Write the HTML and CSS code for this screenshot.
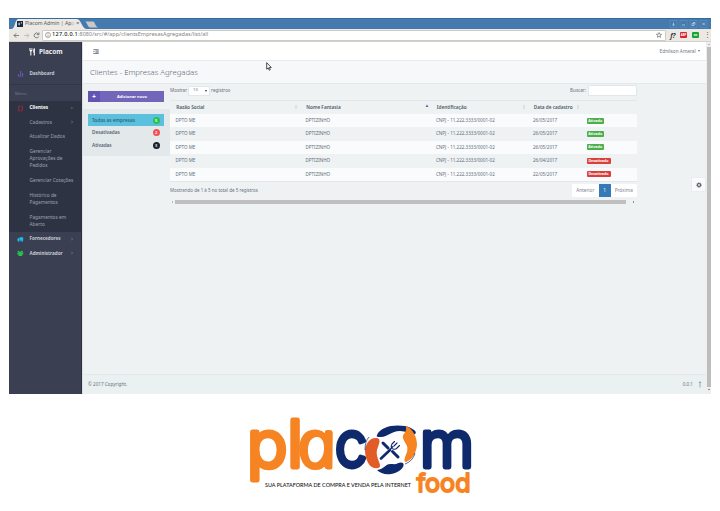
FILE: index.html
```html
<!DOCTYPE html>
<html lang="pt-BR">
<head>
<meta charset="utf-8">
<title>Placom Admin</title>
<link rel="stylesheet" href="styles.css">
</head>
<body>
<div class="window">
  <div class="titlebar">
    <div class="tab">
      <svg class="tab-shape" viewBox="0 0 92 10"><path d="M3 10C6 9 6 1 9 0H68C72 0 73 9 77 10Z" fill="#ece8e4"/><path d="M76 2.500H84C86 2.500 86 7 89 8.500H81C79 8.500 78 3.500 76 2.500Z" fill="#c9c7c7"/></svg>
      <svg class="favicon" viewBox="0 0 7 7"><rect width="7" height="7" fill="#18283e"/><path d="M1.500 2h2v3h-2zM4.500 1.200h1.300v2H4.500z" fill="#9badc0"/></svg>
      <span class="tab-title">Placom Admin | Ap<i>p</i></span><span class="tab-close">×</span>
    </div>
    <div class="controls">
      <svg viewBox="0 0 40 8" fill="none" stroke="#6894bd" stroke-width=".5"><rect x="1" y=".5" width="7" height="7"/><rect x="11" y=".5" width="7" height="7"/><rect x="21" y=".5" width="7" height="7"/><rect x="31" y=".5" width="7" height="7"/><g stroke="#c9dbea" stroke-width=".7"><path d="M4.500 2.500v3M3.300 5h2.400M13 5h3M23 3.500h2V5.500h-2zM24 2.500h2v2M33.400 2.700l2.500 2.500M35.900 2.700l-2.500 2.500"/></g></svg>
    </div>
  </div>
  <div class="toolbar">
    <svg class="nav" viewBox="0 0 32 9" fill="none" stroke="#666" stroke-width=".8"><path d="M9 4.500H4M6.300 2.200L4 4.500L6.300 6.800"/><path d="M14 4.500h5M16.700 2.200L19 4.500L16.700 6.800" stroke="#b7b4b0"/><path d="M28.500 3A2.400 2.400 0 1 0 28.800 5.400M29 1.500V3.600H26.800"/></svg>
    <div class="address">
      <svg viewBox="0 0 6 6" fill="none" stroke="#666" stroke-width=".6"><circle cx="3" cy="3" r="2.500"/><path d="M3 2.600v2M3 1.300v.6"/></svg>
      <span class="url"><b>127.0.0.1</b>:8080/src/#/app/clientsEmpresasAgregadas/list/all</span>
      <svg class="star" viewBox="0 0 6 6" fill="none" stroke="#555" stroke-width=".6"><path d="M3 .5l.7 1.700 1.900.1L4.100 3.500l.5 1.900L3 4.300 1.400 5.400l.5-1.900L.4 2.300l1.900-.1z"/></svg>
    </div>
    <span class="fq">f?</span><span class="ext red">ABP</span><span class="ext green">on</span><span class="dots">⋮</span>
  </div>
  <div class="app">
    <aside class="sidebar">
      <div class="brand"><svg viewBox="0 0 8 9" fill="#fff"><path d="M.5 0h.7v2.300h.6V0h.7v2.300h.6V0h.7v3.200L2.700 4v4.600H1.500V4L.5 3.200zM5 1l1.700-1v8.600H5.400V5H4.700z"/></svg>Placom</div>
      <div class="item dash"><svg class="mi" viewBox="0 0 7 7" fill="#6254b2"><path d="M1 4h1.200v2H1zM3 1h1.200v5H3zM5 3h1.200v3H5zM.5 6.200h6v.5h-6z"/></svg>Dashboard</div>
      <div class="menu-label">Menu</div>
      <div class="submenu">
        <div class="item active"><svg class="mi" viewBox="0 0 7 7" fill="none" stroke="#b52b38" stroke-width=".8"><path d="M3 1.200H1.700v4.600H3M4 1.200h1.300v4.600H4"/></svg>Clientes<svg class="chev" viewBox="0 0 4 4"><path d="M.7 1.300L2 2.600 3.300 1.300"/></svg></div>
        <div class="sub">Cadastros<svg class="chev" viewBox="0 0 4 4"><path d="M1.300.7L2.600 2 1.300 3.300"/></svg></div>
        <div class="sub">Atualizar Dados</div>
        <div class="sub">Gerenciar<br>Aprovações de<br>Pedidos</div>
        <div class="sub">Gerenciar Cotações</div>
        <div class="sub">Histórico de<br>Pagamentos</div>
        <div class="sub">Pagamentos em<br>Aberto</div>
      </div>
      <div class="item"><svg class="mi" viewBox="0 0 7 7" fill="#23b7e5"><path d="M2.500 1.300H6.200v3.500H2.500zM.3 3.200L1.200 2h1v2.800H.3z"/><circle cx="1.600" cy="5.200" r=".7"/><circle cx="5" cy="5.200" r=".7"/></svg>Fornecedores<svg class="chev" viewBox="0 0 4 4"><path d="M1.300.7L2.600 2 1.300 3.300"/></svg></div>
      <div class="item"><svg class="mi" viewBox="0 0 7 7" fill="#27c24c"><circle cx="1.600" cy="1.700" r="1"/><circle cx="5" cy="1.700" r="1"/><circle cx="3.300" cy="2.600" r="1.200"/><path d="M.3 2.700h6v1.500L5.200 4.600V6h-3.700V4.600L.3 4.200z"/></svg>Administrador<svg class="chev" viewBox="0 0 4 4"><path d="M1.300.7L2.600 2 1.300 3.300"/></svg></div>
    </aside>
    <main class="main">
      <header class="topbar">
        <svg class="outdent" viewBox="0 0 6 5" stroke="#596274" stroke-width=".8"><path d="M.3.700h5.400M2.500 2h3.200M2.500 3.200h3.200M.3 4.500h5.400M.3 2.600h1.300"/></svg>
        <span class="user">Ednilson Amaral <i class="caret"></i></span>
      </header>
      <h1>Clientes - Empresas Agregadas</h1>
      <div class="content">
        <section class="filters">
          <div class="add-wrap"><button class="add"><span class="plus">+</span><span class="add-text">Adicionar novo</span></button></div>
          <div class="list">
            <div class="filter on"><span>Todos as empresas</span><em class="badge b-green">5</em></div>
            <div class="filter"><span>Desativadas</span><em class="badge b-red">2</em></div>
            <div class="filter"><span>Ativadas</span><em class="badge b-dark">3</em></div>
          </div>
        </section>
        <section class="data">
          <div class="tools"><span>Mostrar</span><span class="select">10<i class="caret dark"></i></span><span>registros</span><span class="search">Buscar:<input></span></div>
          <div class="row head"><span>Razão Social<svg class="sort" viewBox="0 0 4 6"><path d="M1 2.400L2 .8l1 1.600zM1 3.600l1 1.600 1-1.600z"/></svg></span><span>Nome Fantasia<svg class="sort asc" viewBox="0 0 4 6"><path d="M.5 3L2 .6 3.500 3z"/></svg></span><span>Identificação<svg class="sort" viewBox="0 0 4 6"><path d="M1 2.400L2 .8l1 1.600zM1 3.600l1 1.600 1-1.600z"/></svg></span><span>Data de cadastro<svg class="sort" viewBox="0 0 4 6"><path d="M1 2.400L2 .8l1 1.600zM1 3.600l1 1.600 1-1.600z"/></svg></span><span></span></div>
          <div class="row odd"><span>DPTO ME</span><span>DPTIZINHO</span><span>CNPJ - 11.222.3333/0001-02</span><span>26/05/2017</span><span><em class="tag ok">Ativado</em></span></div>
          <div class="row"><span>DPTO ME</span><span>DPTIZINHO</span><span>CNPJ - 11.222.3333/0001-02</span><span>26/05/2017</span><span><em class="tag ok">Ativado</em></span></div>
          <div class="row odd"><span>DPTO ME</span><span>DPTIZINHO</span><span>CNPJ - 11.222.3333/0001-02</span><span>26/05/2017</span><span><em class="tag ok">Ativado</em></span></div>
          <div class="row"><span>DPTO ME</span><span>DPTIZINHO</span><span>CNPJ - 11.222.3333/0001-02</span><span>26/04/2017</span><span><em class="tag no">Desativado</em></span></div>
          <div class="row odd"><span>DPTO ME</span><span>DPTIZINHO</span><span>CNPJ - 11.222.3333/0001-02</span><span>22/05/2017</span><span><em class="tag no">Desativado</em></span></div>
          <div class="foot"><span class="info">Mostrando de 1 à 5 no total de 5 registros</span><div class="pager"><span>Anterior</span><span class="cur">1</span><span>Próxima</span></div></div>
          <div class="hscroll"><i class="al"></i><i class="bar"></i><i class="ar"></i></div>
        </section>
      </div>
      <footer><span>© 2017 Copyright.</span><span class="ver">0.0.1</span><svg class="up" viewBox="0 0 4 7" fill="none" stroke="#6f7a89" stroke-width=".6"><path d="M2 6.500V.8M.8 2L2 .8 3.200 2"/></svg></footer>
      <div class="settings"><svg viewBox="0 0 6 6" fill="none" stroke="#4f5968"><circle cx="3" cy="3" r="1.500" stroke-width="1.200"/><circle cx="3" cy="3" r="2.300" stroke-width=".9" stroke-dasharray=".9 .9"/></svg></div>
    </main>
    <div class="vscroll"><i class="vu"></i><i class="vbar"></i><i class="vd"></i></div>
  </div>
</div>
<svg class="cursor" viewBox="0 0 6 9"><path d="M.7.7v6.500l1.500-1.300 1 2.300 1.100-.5-1-2.200h2z" fill="#fff" stroke="#222" stroke-width=".8"/></svg>
<svg class="logo" viewBox="240 400 240 105">
  <g class="word orange"><text x="247" y="466.500" textLength="56" lengthAdjust="spacingAndGlyphs">pl</text><text class="round-a" transform="translate(301.500 466.500) skewX(12)" textLength="38" lengthAdjust="spacingAndGlyphs">a</text></g>
  <g class="word navy"><text x="335" y="466.500" textLength="32" lengthAdjust="spacingAndGlyphs">c</text><text x="420" y="466.500" textLength="54" lengthAdjust="spacingAndGlyphs">m</text></g>
  <circle cx="391" cy="450" r="22" fill="#fff"/>
  <path d="M377 435C380 427 393 424 405 426C413 428 418 432 415 434C411 436 407 431 400 431C391 431 388 437 381 437C378 437 376 437 377 435Z" fill="#0e2a6d"/>
  <path d="M376 438C382 438 379 444 377 450C375 458 384 467 378 468C370 470 365 460 365 450C366 444 369 438 376 438Z" fill="#e35b26"/>
  <path d="M406 426C413 429 417 437 417 445C416 455 411 460 406 462C403 462 405 457 407 452C409 445 404 443 403 438C402 433 407 434 406 426Z" fill="#f68423"/>
  <path d="M377 470C385 469 385 463 392 464C398 465 399 461 403 463C406 467 398 473 391 474C385 475 380 473 377 470Z" fill="#0e2a6d"/>
  <path d="M405 464Q413 461 415 453M365 450Q365 441 369 437" fill="none" stroke="#0e2a6d" stroke-width=".7"/>
  <g stroke="#0e2a6d" stroke-linecap="round" fill="none"><path d="M381 458.500L390 450" stroke-width="2.600"/><path d="M389 450.500L393 446.500M392 444Q390 448 393 449Q396 450 398 447M392 444L394.500 441.500M394 446L397 443M397 448L399.500 445.500" stroke-width="1.100"/><path d="M383 443L388 448M392.500 451.500L398 457" stroke-width="3"/></g>
  <text class="slogan" x="265" y="487" textLength="146" lengthAdjust="spacingAndGlyphs">SUA PLATAFORMA DE COMPRA E VENDA PELA INTERNET</text>
  <text class="food" x="416.500" y="492" textLength="54" lengthAdjust="spacingAndGlyphs">food</text>
</svg>
</body>
</html>
```

FILE: styles.css
```css
*{box-sizing:border-box}
body{margin:0;width:720px;height:511px;background:#fff;overflow:hidden;position:relative;font:5px/7.3px "Noto Sans",sans-serif;color:#66707e}
svg{display:block;flex:none;overflow:visible}
i,em{font-style:normal}
.window{margin:18px 0 0 9px;width:702px;height:376px;display:flex;flex-direction:column}
.titlebar{height:11px;background:#447aae;display:flex;justify-content:space-between;border-top:1px solid #366b9f}
.tab{width:92px;height:10px;position:relative;display:flex;align-items:center;padding-left:8px;color:#555;font-size:5.5px;white-space:nowrap}
.tab-shape{position:absolute;left:0;top:0;width:92px;height:10px}
.favicon{position:relative;width:6px;height:6px}
.tab-title{position:relative;margin-left:2px;width:51px;font-size:5.1px}
.tab-title i{opacity:.3}
.tab-close{position:relative;font-size:6px}
.controls{width:42px;padding-top:1px}
.controls svg{width:40px;height:8px}
.toolbar{height:13px;background:#ece8e4;display:flex;align-items:center;border-bottom:1px solid #d5d1cd}
.nav{width:32px;height:9px;margin-left:1px}
.address{width:628px;height:11px;background:#fff;border:1px solid #cfcac5;border-radius:1px;display:flex;align-items:center;padding:0 3px 0 2px}
.address svg{width:6px;height:6px}
.url{margin-left:1px;font-size:5.5px;color:#858585;white-space:nowrap}
.url b{font-weight:500;color:#222;letter-spacing:.3px}
.address .star{margin-left:auto}
.fq{margin-left:4px;width:10px;font:italic bold 6.5px "Noto Sans",sans-serif;color:#333}
.ext{width:7px;height:6px;border-radius:1px;color:#fff;font-size:2.8px;line-height:6px;text-align:center;font-weight:bold}
.red{background:#d8232c}
.green{background:#16a62f;margin-left:5px}
.dots{margin-left:5px;font-size:7px;color:#555}
.app{height:352px;display:flex}
.sidebar{width:73px;background:#3a3f51;color:#b3b7c4;flex:none;border-right:1px solid #2e3344}
.brand{height:19px;display:flex;align-items:center;padding-left:20px;color:#eceef4;font-size:6.5px;font-weight:bold;white-space:nowrap}
.brand svg{width:7px;height:8px;margin-right:3px}
.item,.sub{position:relative;padding:3.65px 0 3.65px 20.500px;white-space:nowrap;line-height:7.300px;font-size:4.800px}
.item{font-weight:bold;font-size:4.6px;color:#c6cad5}
.dash{height:23.500px;padding-top:9px;border-bottom:1px solid #323747}
.mi{position:absolute;left:8px;top:4px;width:7px;height:7px}
.dash .mi{top:9px}
.chev{position:absolute;right:7px;top:5px;width:4px;height:4px;fill:none;stroke:#868d9e;stroke-width:.6}
.menu-label{height:16px;padding:5.500px 0 0 6px;font-size:4.3px;color:#777e91}
.submenu{background:#2e3344;color:#9ba1b0}
.submenu .active{color:#fff}
.main{width:624px;position:relative;background:#eef2f3;display:flex;flex-direction:column;border-left:1px solid #dce0e4}
.topbar{height:19px;background:#fff;border-bottom:1px solid #e8ebed;display:flex;align-items:center;justify-content:space-between;padding:0 6px 0 10px}
.outdent{width:6px;height:5px}
.user{font-size:4.75px;color:#6f7784;padding-top:1px}
.caret{display:inline-block;border:1.300px solid transparent;border-top:2px solid #6f7784;border-bottom:0;vertical-align:1px;margin-left:1px}
h1{margin:0;height:23px;padding-left:7px;background:#f6f8f9;border-bottom:1px solid #e3e8ea;font-weight:300;font-size:7.7px;line-height:23px;color:#5c6673;white-space:nowrap}
.content{height:290px;display:flex}
.filters{width:87px}
.add-wrap{height:25px;padding:6.500px 6px 0 5px}
.add{display:flex;width:76px;height:11px;padding:0;border:0;background:#7266ba;color:#fff;font:bold 4.1px/11px "Noto Sans",sans-serif;align-items:center}
.plus{width:12px;background:#6254b2;font-size:7px;height:11px}
.add-text{flex:1;font-size:4px}
.list{height:47px;background:#e3e8eb;padding:5.300px 6px 0 5px}
.filter{height:12.500px;display:flex;align-items:center;justify-content:space-between;padding:.5px 4px 0;font-size:4.7px;font-weight:600;color:#566170}
.on{background:#5bc0de;height:12px;color:#34667a}
.badge{width:7.500px;height:7px;border-radius:4px;color:#fff;font-size:4px;line-height:7px;text-align:center}
.b-green{background:#27c24c}
.b-red{background:#f05050}
.b-dark{background:#18222d}
.data{width:467px}
.tools{height:16px;display:flex;align-items:center;font-size:4.6px;padding-bottom:3px}
.select{width:22px;height:10px;background:#fff;border:1px solid #e2e7e9;margin:0 1px;padding-left:4px;font-size:4px;line-height:8.500px;display:flex;align-items:center;gap:7px}
.dark{border-top-color:#333;margin:0}
.search{margin-left:auto;display:flex;align-items:center;gap:2px}
.search input{width:49px;height:11px;border:1px solid #e2e7e9;background:#fff;padding:0}
.row{height:13.450px;display:grid;grid-template-columns:130px 130.500px 97px 54px 55.500px;align-items:center;color:#636e7b;font-size:4.55px;white-space:nowrap}
.row>span{padding-left:5.500px;position:relative}
.odd{background:#fafbfc}
.head{border-top:1px solid #e2e7e9;font-weight:600;font-size:4.7px;color:#4e5967;height:13.800px}
.head>span{padding-left:6.300px}
.sort{position:absolute;right:2px;top:.5px;width:4px;height:6px;fill:#c4cbd0}
.asc{fill:#6961b4}
.tag{display:block;width:17.500px;height:6px;margin-left:-.5px;border-radius:1px;color:#fff;font-size:3.6px;line-height:6px;font-weight:bold;text-align:center}
.ok{background:#4cae4c}
.no{background:#d9403d;width:24px}
.foot{display:flex;justify-content:space-between;height:18px;border-top:1px solid #e2e7e9}
.info{margin-top:5px;font-size:4.45px;letter-spacing:.02px}
.pager{display:flex;margin-top:2.500px;height:12.500px;background:#fff;line-height:12px;font-size:4.7px;color:#7a838f}
.pager span{width:26.500px;text-align:center}
.pager .cur{width:12px;background:#337ab7;color:#fff}
.hscroll{height:5px;display:flex;align-items:center;margin-top:1px;padding-left:2px}
.bar{width:451px;height:4px;background:#bfbfbf;margin-left:2px}
.al,.ar{border:1.200px solid transparent;border-right:1.600px solid #888;border-left:0}
.ar{border-left:1.600px solid #333;border-right:0;margin-left:7px}
footer{height:20px;margin-top:auto;border-top:1px solid #e3e8ea;background:#ebf0f1;display:flex;align-items:center;padding:0 4px 0 5px;font-size:4.6px}
.ver{margin-left:auto;margin-right:5px}
.up{width:4px;height:7px}
.settings{position:absolute;right:0;top:135px;width:15px;height:15px;background:#f8fafb;border:1px solid #e8edef;display:flex;align-items:center;justify-content:center}
.settings svg{width:6px;height:6px}
.vscroll{width:5px;background:#eee;display:flex;flex-direction:column;align-items:center;padding:1.500px 0}
.vu,.vd{border:1.200px solid transparent;border-bottom:1.600px solid #888;border-top:0}
.vd{border-top:1.600px solid #333;border-bottom:0}
.vbar{width:4px;height:340px;background:#bdbdbd;margin:2px 0}
.cursor{position:absolute;left:265.500px;top:62px;width:6px;height:9px}
.logo{position:absolute;left:240px;top:400px;width:240px;height:105px}
.word{font:300 64px Inter,sans-serif;stroke-width:4.800px;stroke-linejoin:round}
.word .round-a{font:italic 300 65px "Open Sans",sans-serif}
.orange{fill:#f68423;stroke:#f68423}
.navy{fill:#0e2a6d;stroke:#0e2a6d}
.slogan{font:500 5.5px Lato,sans-serif;fill:#111}
.food{font:400 25.500px Inter,sans-serif;fill:#f68423;stroke:#f68423;stroke-width:1.800px;stroke-linejoin:round}
```
